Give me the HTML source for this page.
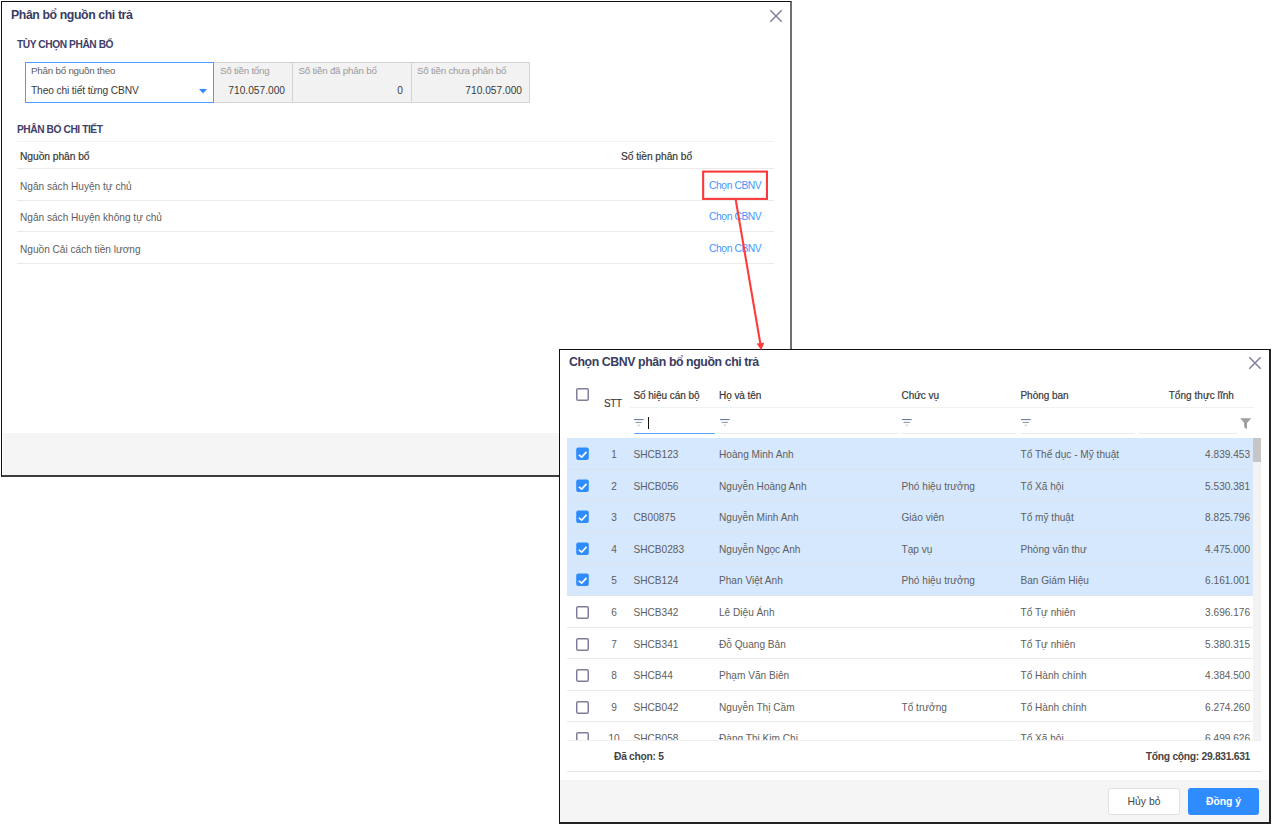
<!DOCTYPE html>
<html lang="vi"><head><meta charset="utf-8"><title>Phân bổ nguồn chi trả</title>
<style>
html,body{margin:0;padding:0}
body{width:1273px;height:827px;background:#fff;position:relative;overflow:hidden;font-family:"Liberation Sans",sans-serif;font-size:10.1px;color:#5e5e5e;}
.a{position:absolute;white-space:nowrap;line-height:12px}
#d1{position:absolute;left:1px;top:1px;width:791px;height:476px;box-sizing:border-box;border:1px solid #111;border-right:2px solid #707070;border-bottom:2px solid #3c3c3c;background:#fff}
#d1 .foot{position:absolute;left:1px;right:0;top:431px;bottom:0;background:#f5f5f5}
.ttl{font-weight:bold;color:#393c62;font-size:12.3px;letter-spacing:-0.4px}
.sec{font-weight:bold;color:#3d4069;font-size:10.2px;letter-spacing:-0.42px}
.hd{color:#383838;-webkit-text-stroke:0.2px #383838;font-size:10px;letter-spacing:-0.05px}
.lnk{color:#3f96ff;font-size:10.3px;letter-spacing:-0.42px}
.ln{position:absolute;height:1px;background:#eaeaea}
.gbox{position:absolute;top:60px;height:41px;box-sizing:border-box;background:#f2f2f2;border:1px solid #d4d4d4;border-left:none}
.lbl{color:#9a9a9a;font-size:9.8px;letter-spacing:-0.23px}
.val{color:#3a3a3a;font-size:10.2px}
#d2{position:absolute;left:559px;top:349px;width:712px;height:475px;box-sizing:border-box;border:1px solid #111;border-right:2px solid #222;border-bottom:2px solid #222;background:#fff}
#d2 .foot{position:absolute;left:0;right:0;top:430px;bottom:0;background:#f5f5f5}
#grid{position:absolute;left:7px;top:88px;width:686px;height:302px;overflow:hidden}
.row{position:absolute;left:0;width:686px;box-sizing:border-box;border-bottom:1px solid #e9e9e9;background:#fff}
.row.sel{background:#d6e8fe;border-bottom-color:#dde3ea}
.row span{position:absolute;white-space:nowrap;line-height:12px;top:11px}
.row .cb{left:9px;top:10px;width:13px;height:13px}
.row .cb svg{position:absolute;left:0;top:0}
.c0{left:32px;width:30px;text-align:center}
.c1{left:66.5px} .c2{left:152px} .c3{left:334.5px} .c4{left:453.5px}
.c5{right:3px}
.fi{position:absolute;top:69px}
.btn{position:absolute;top:438px;height:27px;box-sizing:border-box;border-radius:3px;text-align:center;line-height:26px;font-size:10.4px}
</style></head><body>

<div id="d1">
 <div class="a ttl" style="left:9px;top:7px">Phân bổ nguồn chi trả</div>
 <svg class="a" style="left:767.4px;top:6.5px" width="14" height="14" viewBox="0 0 14 14"><path d="M1.3 1.3 L12.7 12.7 M12.7 1.3 L1.3 12.7" stroke="#7f7f9b" stroke-width="1.5" fill="none"/></svg>
 <div class="a sec" style="left:15px;top:37px">TÙY CHỌN PHÂN BỐ</div>
 <div class="a" style="left:23px;top:60px;width:189px;height:41px;box-sizing:border-box;border:1px solid #4a9eff;background:#fff"></div>
 <div class="a lbl" style="left:29px;top:63px;color:#5e5e5e">Phân bổ nguồn theo</div>
 <div class="a val" style="left:29px;top:83px;letter-spacing:-0.12px">Theo chi tiết từng CBNV</div>
 <svg class="a" style="left:196.6px;top:87.3px" width="8" height="5" viewBox="0 0 8 5"><path d="M0 0 H8 L4 4.4 Z" fill="#2f8cff"/></svg>
 <div class="gbox" style="left:212px;width:79px"></div>
 <div class="gbox" style="left:291px;width:119px"></div>
 <div class="gbox" style="left:410px;width:118px"></div>
 <div class="a lbl" style="left:218px;top:63px">Số tiền tổng</div>
 <div class="a lbl" style="left:296.5px;top:63px">Số tiền đã phân bổ</div>
 <div class="a lbl" style="left:415px;top:63px">Số tiền chưa phân bổ</div>
 <div class="a val" style="right:505px;top:83px">710.057.000</div>
 <div class="a val" style="right:387px;top:83px">0</div>
 <div class="a val" style="right:268px;top:83px">710.057.000</div>
 <div class="a sec" style="left:15px;top:122px">PHÂN BỔ CHI TIẾT</div>
 <div class="ln" style="left:15px;width:757px;top:139px;background:#f1f1f1"></div>
 <div class="a hd" style="left:18px;top:149px;font-size:10.25px">Nguồn phân bổ</div>
 <div class="a hd" style="left:619px;top:149px;font-size:10.25px">Số tiền phân bổ</div>
 <div class="ln" style="left:15px;width:757px;top:166px"></div>
 <div class="a" style="left:18px;top:179px">Ngân sách Huyện tự chủ</div>
 <div class="a lnk" style="left:707px;top:178px">Chọn CBNV</div>
 <div class="ln" style="left:15px;width:757px;top:198px"></div>
 <div class="a" style="left:18px;top:210px">Ngân sách Huyện không tự chủ</div>
 <div class="a lnk" style="left:707px;top:209px">Chọn CBNV</div>
 <div class="ln" style="left:15px;width:757px;top:229px"></div>
 <div class="a" style="left:18px;top:242px">Nguồn Cải cách tiền lương</div>
 <div class="a lnk" style="left:707px;top:241px">Chọn CBNV</div>
 <div class="ln" style="left:15px;width:757px;top:261px"></div>
 <div class="foot"></div>
</div>



<div id="d2">
 <div class="a ttl" style="left:9px;top:6px">Chọn CBNV phân bổ nguồn chi trả</div>
 <svg class="a" style="left:688.45px;top:5.8px" width="14" height="14" viewBox="0 0 14 14"><path d="M1.3 1.3 L12.7 12.7 M12.7 1.3 L1.3 12.7" stroke="#7f7f9b" stroke-width="1.5" fill="none"/></svg>
 <svg class="a" style="left:16px;top:38px" viewBox="0 0 13 13" width="13" height="13"><rect x="0.75" y="0.75" width="11.5" height="11.5" rx="1.3" fill="#fff" stroke="#7e7e99" stroke-width="1.5"/></svg>
 <div class="a hd" style="left:44px;top:48px;font-size:10px;-webkit-text-stroke-width:0.1px;letter-spacing:-0.35px">STT</div>
 <div class="a hd" style="left:73.5px;top:40px">Số hiệu cán bộ</div>
 <div class="a hd" style="left:159px;top:40px">Họ và tên</div>
 <div class="a hd" style="left:341.5px;top:40px">Chức vụ</div>
 <div class="a hd" style="left:460.5px;top:40px">Phòng ban</div>
 <div class="a hd" style="right:35px;top:40px;letter-spacing:0.06px">Tổng thực lĩnh</div>
 <div class="ln" style="left:70px;width:624px;top:57px;background:#f1f1f1"></div>
 <svg class="fi" style="left:74px" width="10" height="8" viewBox="0 0 10 8"><rect x="0" y="0" width="9.7" height="1.1" fill="#6b7f99"/><rect x="1.6" y="2.9" width="6.3" height="1.1" fill="#8d9db3"/><rect x="3.8" y="5.6" width="1.9" height="1.2" fill="#b3bdcc"/></svg><svg class="fi" style="left:159.5px" width="10" height="8" viewBox="0 0 10 8"><rect x="0" y="0" width="9.7" height="1.1" fill="#6b7f99"/><rect x="1.6" y="2.9" width="6.3" height="1.1" fill="#8d9db3"/><rect x="3.8" y="5.6" width="1.9" height="1.2" fill="#b3bdcc"/></svg><svg class="fi" style="left:342px" width="10" height="8" viewBox="0 0 10 8"><rect x="0" y="0" width="9.7" height="1.1" fill="#6b7f99"/><rect x="1.6" y="2.9" width="6.3" height="1.1" fill="#8d9db3"/><rect x="3.8" y="5.6" width="1.9" height="1.2" fill="#b3bdcc"/></svg><svg class="fi" style="left:461px" width="10" height="8" viewBox="0 0 10 8"><rect x="0" y="0" width="9.7" height="1.1" fill="#6b7f99"/><rect x="1.6" y="2.9" width="6.3" height="1.1" fill="#8d9db3"/><rect x="3.8" y="5.6" width="1.9" height="1.2" fill="#b3bdcc"/></svg>
 <div class="a" style="left:88px;top:67px;width:1px;height:12px;background:#111"></div>
 <div class="ln" style="left:74px;width:81px;top:83px;height:1.2px;background:#58a4ff"></div>
 <div class="ln" style="left:159px;width:179px;top:83px"></div>
 <div class="ln" style="left:342px;width:114px;top:83px"></div>
 <div class="ln" style="left:461px;width:113px;top:83px"></div>
 <div class="ln" style="left:579px;width:98px;top:83px"></div>
 <svg class="a" style="left:680px;top:67.6px" width="12" height="12" viewBox="0 0 12 12"><path d="M0.2 0.2 H11.2 L7 5 V11.2 L4.2 9.2 V5 Z" fill="#9e9e9e"/></svg>
 <div id="grid">
<div class="row sel" style="top:0px;height:32px"><span class="cb"><svg viewBox="0 0 13 14" width="13" height="14" style="top:-1px"><rect x="0.2" y="0.55" width="12.6" height="12.5" rx="2" fill="#2f8cff"/><path d="M2.9 7.85 L5.7 10.1 L10.5 4.9" fill="none" stroke="#fff" stroke-width="1.6"/></svg></span><span class="c0">1</span><span class="c1">SHCB123</span><span class="c2">Hoàng Minh Anh</span><span class="c3"></span><span class="c4">Tổ Thể dục - Mỹ thuật</span><span class="c5">4.839.453</span></div>
<div class="row sel" style="top:32px;height:31px"><span class="cb"><svg viewBox="0 0 13 14" width="13" height="14" style="top:-1px"><rect x="0.2" y="0.55" width="12.6" height="12.5" rx="2" fill="#2f8cff"/><path d="M2.9 7.85 L5.7 10.1 L10.5 4.9" fill="none" stroke="#fff" stroke-width="1.6"/></svg></span><span class="c0">2</span><span class="c1">SHCB056</span><span class="c2">Nguyễn Hoàng Anh</span><span class="c3">Phó hiệu trưởng</span><span class="c4">Tổ Xã hội</span><span class="c5">5.530.381</span></div>
<div class="row sel" style="top:63px;height:32px"><span class="cb"><svg viewBox="0 0 13 14" width="13" height="14" style="top:-1px"><rect x="0.2" y="0.55" width="12.6" height="12.5" rx="2" fill="#2f8cff"/><path d="M2.9 7.85 L5.7 10.1 L10.5 4.9" fill="none" stroke="#fff" stroke-width="1.6"/></svg></span><span class="c0">3</span><span class="c1">CB00875</span><span class="c2">Nguyễn Minh Anh</span><span class="c3">Giáo viên</span><span class="c4">Tổ mỹ thuật</span><span class="c5">8.825.796</span></div>
<div class="row sel" style="top:95px;height:31px"><span class="cb"><svg viewBox="0 0 13 14" width="13" height="14" style="top:-1px"><rect x="0.2" y="0.55" width="12.6" height="12.5" rx="2" fill="#2f8cff"/><path d="M2.9 7.85 L5.7 10.1 L10.5 4.9" fill="none" stroke="#fff" stroke-width="1.6"/></svg></span><span class="c0">4</span><span class="c1">SHCB0283</span><span class="c2">Nguyễn Ngọc Anh</span><span class="c3">Tạp vụ</span><span class="c4">Phòng văn thư</span><span class="c5">4.475.000</span></div>
<div class="row sel" style="top:126px;height:32px"><span class="cb"><svg viewBox="0 0 13 14" width="13" height="14" style="top:-1px"><rect x="0.2" y="0.55" width="12.6" height="12.5" rx="2" fill="#2f8cff"/><path d="M2.9 7.85 L5.7 10.1 L10.5 4.9" fill="none" stroke="#fff" stroke-width="1.6"/></svg></span><span class="c0">5</span><span class="c1">SHCB124</span><span class="c2">Phan Việt Anh</span><span class="c3">Phó hiệu trưởng</span><span class="c4">Ban Giám Hiệu</span><span class="c5">6.161.001</span></div>
<div class="row" style="top:158px;height:32px"><span class="cb"><svg viewBox="0 0 13 13" width="13" height="13"><rect x="0.75" y="0.75" width="11.5" height="11.5" rx="1.3" fill="#fff" stroke="#7e7e99" stroke-width="1.5"/></svg></span><span class="c0">6</span><span class="c1">SHCB342</span><span class="c2">Lê Diệu Ánh</span><span class="c3"></span><span class="c4">Tổ Tự nhiên</span><span class="c5">3.696.176</span></div>
<div class="row" style="top:190px;height:31px"><span class="cb"><svg viewBox="0 0 13 13" width="13" height="13"><rect x="0.75" y="0.75" width="11.5" height="11.5" rx="1.3" fill="#fff" stroke="#7e7e99" stroke-width="1.5"/></svg></span><span class="c0">7</span><span class="c1">SHCB341</span><span class="c2">Đỗ Quang Bản</span><span class="c3"></span><span class="c4">Tổ Tự nhiên</span><span class="c5">5.380.315</span></div>
<div class="row" style="top:221px;height:32px"><span class="cb"><svg viewBox="0 0 13 13" width="13" height="13"><rect x="0.75" y="0.75" width="11.5" height="11.5" rx="1.3" fill="#fff" stroke="#7e7e99" stroke-width="1.5"/></svg></span><span class="c0">8</span><span class="c1">SHCB44</span><span class="c2">Phạm Văn Biên</span><span class="c3"></span><span class="c4">Tổ Hành chính</span><span class="c5">4.384.500</span></div>
<div class="row" style="top:253px;height:31px"><span class="cb"><svg viewBox="0 0 13 13" width="13" height="13"><rect x="0.75" y="0.75" width="11.5" height="11.5" rx="1.3" fill="#fff" stroke="#7e7e99" stroke-width="1.5"/></svg></span><span class="c0">9</span><span class="c1">SHCB042</span><span class="c2">Nguyễn Thị Cầm</span><span class="c3">Tổ trưởng</span><span class="c4">Tổ Hành chính</span><span class="c5">6.274.260</span></div>
<div class="row" style="top:284px;height:32px"><span class="cb"><svg viewBox="0 0 13 13" width="13" height="13"><rect x="0.75" y="0.75" width="11.5" height="11.5" rx="1.3" fill="#fff" stroke="#7e7e99" stroke-width="1.5"/></svg></span><span class="c0">10</span><span class="c1">SHCB058</span><span class="c2">Đàng Thị Kim Chi</span><span class="c3"></span><span class="c4">Tổ Xã hội</span><span class="c5">6.499.626</span></div>
 </div>
 <div class="a" style="left:693px;top:88px;width:8px;height:302px;background:#f3f3f3"></div>
 <div class="a" style="left:693px;top:88px;width:8px;height:24px;background:#c6c6c6"></div>
 <div class="ln" style="left:7px;width:694px;top:390px;background:#efefef"></div>
 <div class="a" style="left:54px;top:401px;font-weight:bold;color:#444;font-size:10.3px;letter-spacing:-0.3px">Đã chọn: 5</div>
 <div class="a" style="right:19px;top:401px;font-weight:bold;color:#444;font-size:10.3px;letter-spacing:-0.3px">Tổng cộng: 29.831.631</div>
 <div class="ln" style="left:7px;width:694px;top:421px;background:#e6e6e6"></div>
 <div class="foot"></div>
 <div class="btn" style="left:548px;width:72px;background:#fff;border:1px solid #e0e0e0;color:#444">Hủy bỏ</div>
 <div class="btn" style="left:628px;width:71px;background:#2f8cff;color:#fff;font-weight:bold;line-height:27px">Đồng ý</div>
</div>
<svg style="position:absolute;left:0;top:0;pointer-events:none" width="1273" height="827" viewBox="0 0 1273 827">
 <rect x="703.15" y="171.6" width="63.8" height="27.3" fill="none" stroke="#f83a3a" stroke-width="2.1"/>
 <path d="M735.7 199.6 L760.4 344" stroke="#ff3b3b" stroke-width="2.1" fill="none"/>
 <path d="M756.6 343.6 L764.2 342.6 L761.3 350.3 Z" fill="#ff3b3b"/>
</svg>
</body></html>
